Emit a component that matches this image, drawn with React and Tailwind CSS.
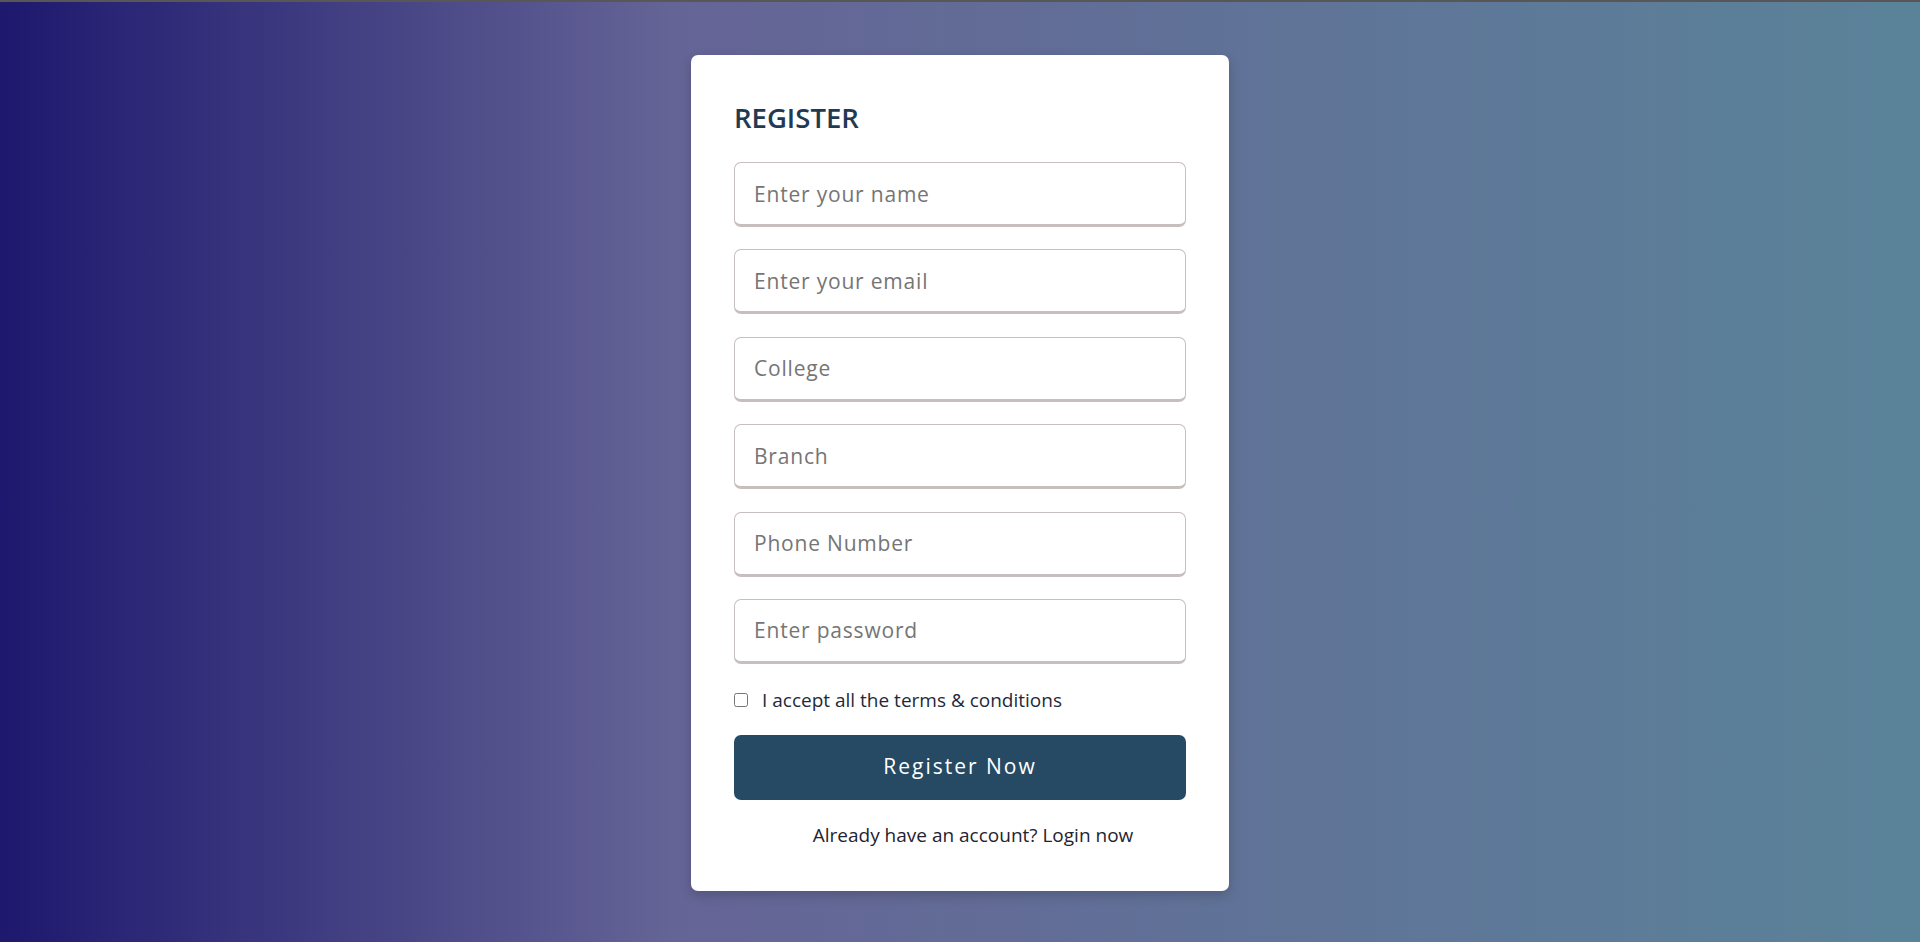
import { useState } from "react";

const fields = [
  { type: "text", placeholder: "Enter your name" },
  { type: "email", placeholder: "Enter your email" },
  { type: "text", placeholder: "College" },
  { type: "text", placeholder: "Branch" },
  { type: "tel", placeholder: "Phone Number" },
  { type: "password", placeholder: "Enter password" },
];

export default function App() {
  const [accepted, setAccepted] = useState(false);

  return (
    <div className="min-h-screen flex flex-col bg-[linear-gradient(90deg,#1e186e_0%,#656496_35%,#5a8399_100%)] font-['Open_Sans',sans-serif]">
      <div className="h-[2px] bg-[#575757]" />
      <div className="flex-1 flex justify-center pt-[53px]">
        <div className="w-[538px] h-[836px] bg-white rounded-[7px] shadow-[0_4px_12px_rgba(0,0,0,0.18)] px-[43px] pt-[42px]">
          <h2 className="text-[27.5px] leading-[42px] font-semibold text-[#1f3a52]">REGISTER</h2>

          <form className="mt-[23px] flex flex-col gap-[22.4px]" onSubmit={(e) => e.preventDefault()}>
            {fields.map((f) => (
              <input
                key={f.placeholder}
                type={f.type}
                placeholder={f.placeholder}
                className="h-[65px] w-full rounded-[7px] border-[1.5px] border-b-[3px] border-[#c7bebe] px-[19px] text-[21px] tracking-[0.8px] text-[#333] placeholder:text-[#757575] outline-none"
              />
            ))}

            <label className="mt-[1px] flex items-center gap-[14px] h-[25px] text-[19px] text-[#1e2a3a]">
              <input
                type="checkbox"
                checked={accepted}
                onChange={(e) => setAccepted(e.target.checked)}
                className="w-[14px] h-[14px] accent-[#264a63]"
              />
              I accept all the terms &amp; conditions
            </label>

            <button
              type="submit"
              className="h-[65px] w-full rounded-[7px] bg-[#264a63] text-white text-[21px] tracking-[2px]"
            >
              Register Now
            </button>
          </form>

          <p className="mt-[23px] pl-[26px] text-center text-[19px] leading-[25px] text-[#1f2430]">
            Already have an account? Login now
          </p>
        </div>
      </div>
    </div>
  );
}
